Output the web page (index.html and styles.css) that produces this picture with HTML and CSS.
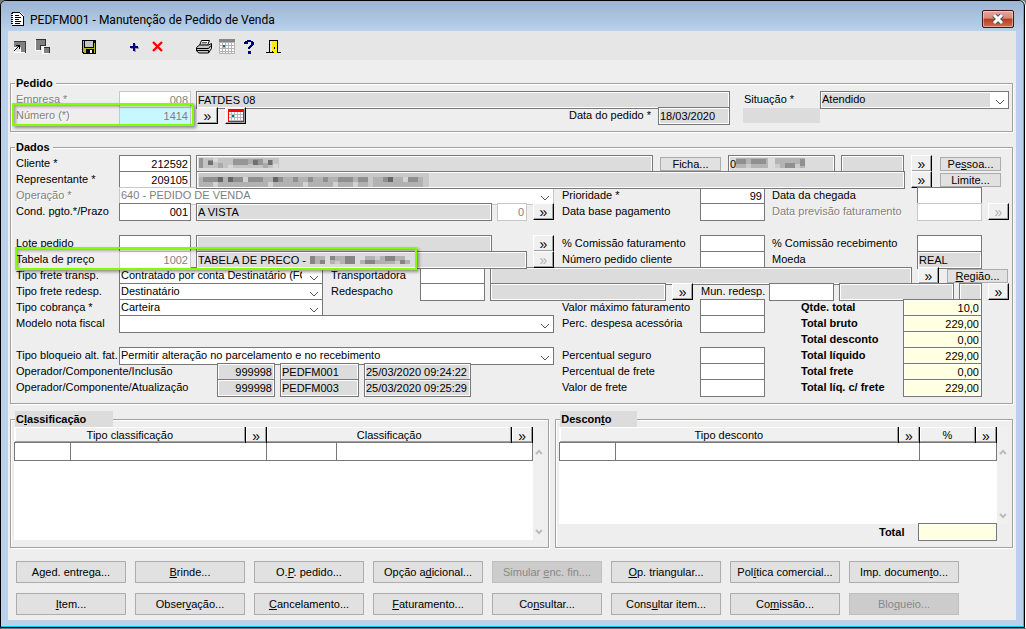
FILE: index.html
```html
<!DOCTYPE html>
<html lang="pt-BR">
<head>
    <meta charset="UTF-8" />
    <meta name="viewport" content="width=device-width, initial-scale=1.0" />
    <title>PEDFM001 - Manutenção de Pedido de Venda</title>
    <link rel="stylesheet" href="styles.css">
</head>
<body>

<div class="window">
    <header class="titlebar">
        <svg width="14" height="16" viewBox="0 0 14 16" shape-rendering="crispEdges">
            <path d="M1 1h8l4 4v10H1z" fill="#fff"/>
            <path d="M1 1h8v1H1zM9 2h1v1H9zM10 3h1v1h-1zM11 4h1v1h-1zM12 5h1v10h-1zM1 14h12v1H1z" fill="#000"/>
            <path d="M0 2h2v1H0zM0 4h2v1H0zM0 6h2v1H0zM0 8h2v1H0zM0 10h2v1H0zM0 12h2v1H0zM4 4h4v1H4zM4 6h6v1H4zM4 8h4v1H4zM4 10h6v1H4zM4 12h5v1H4z" fill="#000"/>
        </svg>
        <h1>PEDFM001 - Manutenção de Pedido de Venda</h1>
        <button class="close" aria-label="Fechar">
            <svg width="12" height="10" viewBox="0 0 12 10">
                <path d="M2 1l8 8M10 1l-8 8" stroke="#4c5363" stroke-width="5"/>
                <path d="M2 1l8 8M10 1l-8 8" stroke="#fff" stroke-width="3"/>
            </svg>
        </button>
    </header>

    <div class="client">
        <nav class="toolbar">
            <div class="tools">
                <button class="tool" aria-label="Restaurar">
                    <svg width="16" height="16" viewBox="0 0 16 16" shape-rendering="crispEdges">
                        <path d="M2 2h11v11H9V8H2z" fill="#808080"/>
                        <path d="M2 2h12v1H2zM13 2h1v12h-1z" fill="#404040"/>
                        <path d="M2 8h2v1H2zM3 13h10v1H3zM2 10h1v4H2zM8 9h1v4H8z" fill="#fff"/>
                        <path d="M4 6h4v4H7V8H6v1H5v1H4v1H3v1H2v-1h1v-1h1V9h1V8h1V7H4z" fill="#000"/>
                    </svg>
                </button>
                <button class="tool" aria-label="Janelas">
                    <svg width="16" height="16" viewBox="0 0 16 16" shape-rendering="crispEdges">
                        <path d="M0 1h10v7H5v4H0zM7 8h6v7H7z" fill="#fff"/>
                        <path d="M1 1h9v5H5v5H1zM9 9h5v5H9z" fill="#808080"/>
                        <path d="M1 0h10v1H1zM10 0h1v6h-1zM5 6h6v1H5zM5 6h1v5H5zM9 8h6v1H9zM14 8h1v6h-1z" fill="#303030"/>
                    </svg>
                </button>
            </div>
            <div class="tools">
                <button class="tool" aria-label="Salvar">
                    <svg width="16" height="16" viewBox="0 0 16 16" shape-rendering="crispEdges">
                        <path d="M1 1h14v14H2l-1-1z" fill="#000"/>
                        <path d="M2 2h1v11H2zM13 4h1v10h-1zM3 9h10v1H3zM3 10h2v4H3z" fill="#b5b52c"/>
                        <path d="M4 2h8v6H4z" fill="#c6c6c6"/>
                        <path d="M9 11h2v3H9z" fill="#fff"/>
                    </svg>
                </button>
            </div>
            <div class="tools">
                <button class="tool" aria-label="Novo">
                    <svg width="16" height="16" viewBox="0 0 16 16" shape-rendering="crispEdges">
                        <path d="M7 5h2v3h3v2H9v3H7v-3H4V8h3z" fill="#9a9aa5"/>
                        <path d="M6 4h2v3h3v2H8v3H6V9H3V7h3z" fill="#000080"/>
                    </svg>
                </button>
                <button class="tool" aria-label="Excluir">
                    <svg width="16" height="16" viewBox="0 0 16 16">
                        <path d="M3 3l9 9M12 3l-9 9" stroke="#f00" stroke-width="2.4"/>
                    </svg>
                </button>
            </div>
            <div class="tools">
                <button class="tool" aria-label="Imprimir">
                    <svg width="16" height="16" viewBox="0 0 16 16">
                        <path d="M5.500 1.500h8l-2 5h-8z" fill="#fff" stroke="#000"/>
                        <path d="M6 3.500h5M5.500 5h5" stroke="#666"/>
                        <path d="M.5 8.500l3-2.500h9l3-1.500v5l-3 4.500H3l-2.500-2z" fill="#c8c8c8" stroke="#000"/>
                        <path d="M1 9.500h11.500l2.500-3M1 11.500h11.500v2.500" fill="none" stroke="#000"/>
                        <path d="M7.500 10.500h3" stroke="#e8e800"/>
                    </svg>
                </button>
                <button class="tool" aria-label="Calendário">
                    <svg width="16" height="16" viewBox="0 0 16 16" shape-rendering="crispEdges">
                        <path d="M0 0h16v15H0z" fill="#b4b4b4"/>
                        <path d="M0 0h16v3H0z" fill="#858585"/>
                        <path d="M1 4h2v2H1zM4 4h2v2H4zM7 4h2v2H7zM10 4h2v2h-2zM13 4h2v2h-2zM1 7h2v2H1zM7 7h2v2H7zM10 7h2v2h-2zM13 7h2v2h-2zM1 10h2v2H1zM4 10h2v2H4zM7 10h2v2H7zM10 10h2v2h-2zM13 10h2v2h-2zM1 13h2v1H1zM4 13h2v1H4zM7 13h2v1H7zM10 13h2v1h-2zM13 13h2v1h-2z" fill="#fff"/>
                        <path d="M4 6h2v2H4z" fill="#106aa8"/>
                    </svg>
                </button>
                <button class="tool" aria-label="Ajuda">
                    <svg width="16" height="16" viewBox="0 0 16 16" shape-rendering="crispEdges">
                        <path d="M2 3h1V2h2V1h4v1h2v1h1v3h-1v1h-1v1H9v1H8v1H6V8h1V7h1V6h1V3H6v2H2zM6 12h3v3H6z" fill="#000080"/>
                    </svg>
                </button>
                <button class="tool" aria-label="Sair">
                    <svg width="16" height="16" viewBox="0 0 16 16" shape-rendering="crispEdges">
                        <path d="M4 1h9v12h3v1h-5v1h-1v-1H1v-1h3z" fill="#000"/>
                        <path d="M5 2h2v11H5z" fill="#e6e6e6"/>
                        <path d="M7 2h5v12h-1v1h-1v-1H9v-1H8v-1H7z" fill="#f8f000"/>
                        <path d="M9 8h1v2H9zM12 2h1v11h-1z" fill="#000"/>
                    </svg>
                </button>
            </div>
        </nav>

        <form class="form">
            <fieldset>
                <legend>Pedido</legend>
                <div class="row">
                    <label class="off" for="empresa">Empresa *</label>
                    <input class="code num" id="empresa" value="008" disabled>
                    <input class="show grow" value="FATDES 08" aria-label="Nome da empresa" readonly>
                    <label class="status" for="situacao">Situação *</label>
                    <select class="status-list show" id="situacao"><option>Atendido</option></select>
                </div>
                <div class="row">
                    <div class="mark mark-number">
                        <label class="off" for="numero">Número (*)</label>
                        <input class="code num key" id="numero" value="1414" disabled>
                    </div>
                    <button type="button" class="more" aria-label="Buscar pedido">»</button>
                    <button type="button" class="more cal" aria-label="Calendário">
                        <svg width="16" height="13" viewBox="0 0 16 13" shape-rendering="crispEdges">
                            <path d="M0 0h16v13H0z" fill="#f00"/>
                            <path d="M1 3h14v9H1z" fill="#bbb"/>
                            <path d="M1 3h2v2H1zM4 3h2v2H4zM7 3h2v2H7zM10 3h2v2h-2zM13 3h2v2h-2zM1 6h2v2H1zM7 6h2v2H7zM10 6h2v2h-2zM13 6h2v2h-2zM1 9h2v2H1zM4 9h2v2H4zM7 9h2v2H7zM10 9h2v2h-2zM13 9h2v2h-2z" fill="#fff"/>
                            <path d="M4 6h2v2H4z" fill="#106aa8"/>
                        </svg>
                    </button>
                    <label class="order-date" for="data">Data do pedido *</label>
                    <input class="date show" id="data" value="18/03/2020" readonly>
                    <span class="blank"></span>
                </div>
            </fieldset>

            <fieldset>
                <legend>Dados</legend>
                <div class="row">
                    <label for="cliente">Cliente *</label>
                    <input class="code num" id="cliente" value="212592">
                    <div class="hidden-text grow">
                        <input class="show" aria-label="Nome do cliente" readonly>
                        <svg class="mosaic" width="80" height="12" viewBox="0 0 80 12" shape-rendering="crispEdges">
                            <path d="M0 1h80v10H0z" fill="#c3c3c3"/>
                            <path d="M0 1h4v10H0zM9 3h5v5H9zM34 2h15v6H34zM54 2h10v6H54zM69 3h5v5h-5z" fill="#969696"/>
                            <path d="M19 6h5v5h-5zM49 2h5v5h-5zM64 6h5v5h-5z" fill="#aaa"/>
                            <path d="M9 4h5v4H9zM54 3h5v5h-5zM69 3h4v5h-4z" fill="#707070"/>
                            <path d="M14 1h5v4h-5zM29 8h5v3h-5zM74 7h5v4h-5z" fill="#d8d8d8"/>
                        </svg>
                    </div>
                    <button type="button" class="push gap">Ficha...</button>
                    <div class="hidden-text phone">
                        <input class="show" value="0" aria-label="Telefone" readonly>
                        <svg class="mosaic" width="70" height="12" viewBox="0 0 70 12" shape-rendering="crispEdges">
                            <path d="M0 1h32v10H0zM39 1h30v10H39z" fill="#b4b4b4"/>
                            <path d="M0 2h10v5H0zM15 2h15v5H15zM49 6h10v5H49zM64 2h5v7h-5z" fill="#909090"/>
                            <path d="M10 7h5v4h-5zM39 7h5v4h-5zM59 7h5v4h-5z" fill="#ccc"/>
                        </svg>
                    </div>
                    <input class="w63 show gap-1" aria-label="Ramal" readonly>
                    <button type="button" class="more gap" aria-label="Buscar cliente">»</button>
                    <button type="button" class="push gap-3 last">Pe<u>s</u>soa...</button>
                </div>
                <div class="row">
                    <label for="repres">Representante *</label>
                    <input class="code num" id="repres" value="209105">
                    <div class="hidden-text grow">
                        <input class="show" aria-label="Nome do representante" readonly>
                        <svg class="mosaic" width="230" height="14" viewBox="0 0 230 14" shape-rendering="crispEdges">
                            <path d="M0 0h230v14H0z" fill="#c8c8c8"/>
                            <path d="M0 4h169v10H0zM174 4h50v10h-50z" fill="#b2b2b2"/>
                            <path d="M4 4h20v5H4zM34 4h10v5H34zM49 4h15v5H49zM79 4h5v5h-5zM94 4h5v5h-5zM109 4h5v5h-5zM124 4h5v5h-5zM139 4h15v5h-15zM159 4h10v5h-10zM184 4h5v5h-5zM209 4h10v5h-10z" fill="#8f8f8f"/>
                            <path d="M19 4h5v5h-5zM29 4h5v5h-5zM74 4h5v5h-5zM189 4h5v5h-5z" fill="#666"/>
                            <path d="M14 9h5v5h-5zM44 4h5v5h-5zM69 9h5v5h-5zM104 9h5v5h-5zM134 9h5v5h-5zM154 9h5v5h-5zM204 4h5v5h-5z" fill="#d2d2d2"/>
                        </svg>
                    </div>
                    <button type="button" class="more" aria-label="Buscar representante">»</button>
                    <button type="button" class="push gap-3 last">Limite...</button>
                </div>
                <div class="row">
                    <div class="main">
                        <label class="off" for="operacao">Operação *</label>
                        <select class="grow" id="operacao" disabled><option>640 - PEDIDO DE VENDA</option></select>
                    </div>
                    <div class="mid">
                        <label for="prioridade">Prioridade *</label>
                        <input class="num" id="prioridade" value="99">
                    </div>
                    <div class="side">
                        <label for="chegada">Data da chegada</label>
                        <input id="chegada">
                    </div>
                </div>
                <div class="row">
                    <div class="main">
                        <label for="cond">Cond. pgto.*/Prazo</label>
                        <input class="code num" id="cond" value="001">
                        <input class="show grow" value="A VISTA" aria-label="Condição de pagamento" readonly>
                        <input class="w30 num" value="0" aria-label="Prazo" disabled>
                        <button type="button" class="more" aria-label="Buscar condição">»</button>
                    </div>
                    <div class="mid">
                        <label for="base">Data base pagamento</label>
                        <input id="base">
                    </div>
                    <div class="side">
                        <label class="off" for="previsao">Data previsão faturamento</label>
                        <input id="previsao" disabled>
                        <button type="button" class="more" aria-label="Buscar previsão" disabled>»</button>
                    </div>
                </div>
                <div class="row"></div>
                <div class="row">
                    <div class="main">
                        <label for="lote">Lote pedido</label>
                        <input class="code num" id="lote">
                        <input class="show grow" aria-label="Descrição do lote" readonly>
                        <button type="button" class="more after-lot" aria-label="Buscar lote">»</button>
                    </div>
                    <div class="mid">
                        <label for="com-fat">% Comissão faturamento</label>
                        <input id="com-fat">
                    </div>
                    <div class="side">
                        <label for="com-rec">% Comissão recebimento</label>
                        <input id="com-rec">
                    </div>
                </div>
                <div class="row">
                    <div class="main mark mark-table">
                        <label for="tabela">Tabela de preço</label>
                        <input class="code num" id="tabela" value="1002" disabled>
                        <div class="hidden-text grow">
                            <input class="show" value="TABELA DE PRECO -" aria-label="Nome da tabela" readonly>
                            <svg class="mosaic after-name" width="100" height="10" viewBox="0 0 100 10" shape-rendering="crispEdges">
                                <path d="M0 1h15v8H0zM20 1h25v8H20zM50 5h50v4H50zM55 1h40v4H55z" fill="#b2b2b2"/>
                                <path d="M0 1h5v8H0zM10 5h5v4h-5zM20 1h5v4h-5zM35 1h10v8H35zM55 5h10v4H55zM75 1h10v5H75zM90 5h5v4h-5z" fill="#858585"/>
                                <path d="M25 6h5v3h-5zM65 1h5v4h-5zM85 6h5v3h-5z" fill="#ccc"/>
                            </svg>
                        </div>
                        <button type="button" class="more" aria-label="Buscar tabela" disabled>»</button>
                    </div>
                    <div class="mid">
                        <label for="num-cli">Número pedido cliente</label>
                        <input id="num-cli">
                    </div>
                    <div class="side">
                        <label for="moeda">Moeda</label>
                        <input class="show" id="moeda" value="REAL" readonly>
                    </div>
                </div>
                <div class="row">
                    <label for="frete-t">Tipo frete transp.</label>
                    <select class="w204" id="frete-t"><option>Contratado por conta Destinatário (FOB)</option></select>
                    <label class="carrier" for="transp">Transportadora</label>
                    <input class="w65" id="transp">
                    <input class="show grow" aria-label="Nome da transportadora" readonly>
                    <button type="button" class="more" aria-label="Buscar transportadora">»</button>
                    <button type="button" class="push gap-3 gap-end"><u>R</u>egião...</button>
                </div>
                <div class="row">
                    <label for="frete-r">Tipo frete redesp.</label>
                    <select class="w204" id="frete-r"><option>Destinatário</option></select>
                    <label class="carrier" for="redesp">Redespacho</label>
                    <input class="w65" id="redesp">
                    <input class="show grow-3" aria-label="Nome do redespacho" readonly>
                    <button type="button" class="more" aria-label="Buscar redespacho">»</button>
                    <label class="town" for="mun">Mun. redesp.</label>
                    <input class="w65" id="mun">
                    <input class="show grow-2" aria-label="Município" readonly>
                    <input class="show w23" aria-label="UF" readonly>
                    <button type="button" class="more" aria-label="Buscar município">»</button>
                </div>
                <div class="row">
                    <div class="main">
                        <label for="cobranca">Tipo cobrança *</label>
                        <select class="w204" id="cobranca"><option>Carteira</option></select>
                    </div>
                    <div class="mid">
                        <label for="maximo">Valor máximo faturamento</label>
                        <input id="maximo">
                    </div>
                    <div class="side total">
                        <label for="qtde">Qtde. total</label>
                        <input class="num" id="qtde" value="10,0" readonly>
                    </div>
                </div>
                <div class="row">
                    <div class="main">
                        <label for="modelo">Modelo nota fiscal</label>
                        <select class="grow" id="modelo"><option></option></select>
                    </div>
                    <div class="mid">
                        <label for="despesa">Perc. despesa acessória</label>
                        <input id="despesa">
                    </div>
                    <div class="side total">
                        <label for="bruto">Total bruto</label>
                        <input class="num" id="bruto" value="229,00" readonly>
                    </div>
                </div>
                <div class="row">
                    <div class="main"></div>
                    <div class="side total">
                        <label for="desconto">Total desconto</label>
                        <input class="num" id="desconto" value="0,00" readonly>
                    </div>
                </div>
                <div class="row">
                    <div class="main">
                        <label for="bloqueio">Tipo bloqueio alt. fat.</label>
                        <select class="grow" id="bloqueio"><option>Permitir alteração no parcelamento e no recebimento</option></select>
                    </div>
                    <div class="mid">
                        <label for="seguro">Percentual seguro</label>
                        <input id="seguro">
                    </div>
                    <div class="side total">
                        <label for="liquido">Total líquido</label>
                        <input class="num" id="liquido" value="229,00" readonly>
                    </div>
                </div>
                <div class="row">
                    <div class="main">
                        <label class="audit" for="inclusao">Operador/Componente/Inclusão</label>
                        <input class="w58 num show" id="inclusao" value="999998" readonly>
                        <input class="w79 show" value="PEDFM001" aria-label="Componente inclusão" readonly>
                        <input class="w107 show" value="25/03/2020 09:24:22" aria-label="Data inclusão" readonly>
                    </div>
                    <div class="mid">
                        <label for="perc-frete">Percentual de frete</label>
                        <input id="perc-frete">
                    </div>
                    <div class="side total">
                        <label for="frete">Total frete</label>
                        <input class="num" id="frete" value="0,00" readonly>
                    </div>
                </div>
                <div class="row">
                    <div class="main">
                        <label class="audit" for="atualizacao">Operador/Componente/Atualização</label>
                        <input class="w58 num show" id="atualizacao" value="999998" readonly>
                        <input class="w79 show" value="PEDFM003" aria-label="Componente atualização" readonly>
                        <input class="w107 show" value="25/03/2020 09:25:29" aria-label="Data atualização" readonly>
                    </div>
                    <div class="mid">
                        <label for="valor-frete">Valor de frete</label>
                        <input id="valor-frete">
                    </div>
                    <div class="side total">
                        <label for="liq-frete">Total líq. c/ frete</label>
                        <input class="num" id="liq-frete" value="229,00" readonly>
                    </div>
                </div>
            </fieldset>

            <div class="panels">
                <fieldset class="panel panel-class">
                    <legend>C<u>l</u>assificação</legend>
                    <div class="list">
                        <div class="sheet">
                            <table>
                                <colgroup><col class="c-56"><col><col class="c-21"><col class="c-70"><col><col class="c-21"></colgroup>
                                <thead>
                                    <tr>
                                        <th colspan="2">Tipo classificação</th>
                                        <th><button type="button" aria-label="Buscar tipo">»</button></th>
                                        <th colspan="2">Classificação</th>
                                        <th><button type="button" aria-label="Buscar classificação">»</button></th>
                                    </tr>
                                </thead>
                                <tbody>
                                    <tr>
                                        <td><input aria-label="Código do tipo"></td>
                                        <td colspan="2"><input aria-label="Tipo classificação"></td>
                                        <td><input aria-label="Código da classificação"></td>
                                        <td colspan="2"><input aria-label="Classificação"></td>
                                    </tr>
                                </tbody>
                            </table>
                        </div>
                        <div class="scroll">
                            <svg width="8" height="6" viewBox="0 0 8 6"><path d="M1 5l3-3 3 3" fill="none" stroke="#bdbdbd" stroke-width="2"/></svg>
                            <svg width="8" height="6" viewBox="0 0 8 6"><path d="M1 1l3 3 3-3" fill="none" stroke="#bdbdbd" stroke-width="2"/></svg>
                        </div>
                    </div>
                </fieldset>

                <fieldset class="panel panel-disc">
                    <legend>Descon<u>t</u>o</legend>
                    <div class="list">
                        <div class="sheet">
                            <table>
                                <colgroup><col class="c-56"><col><col class="c-21"><col class="c-56"><col class="c-21"></colgroup>
                                <thead>
                                    <tr>
                                        <th colspan="2">Tipo desconto</th>
                                        <th><button type="button" aria-label="Buscar desconto">»</button></th>
                                        <th>%</th>
                                        <th><button type="button" aria-label="Buscar percentual">»</button></th>
                                    </tr>
                                </thead>
                                <tbody>
                                    <tr>
                                        <td><input aria-label="Código do desconto"></td>
                                        <td colspan="2"><input aria-label="Tipo desconto"></td>
                                        <td colspan="2"><input aria-label="Percentual"></td>
                                    </tr>
                                </tbody>
                            </table>
                        </div>
                        <div class="scroll">
                            <svg width="8" height="6" viewBox="0 0 8 6"><path d="M1 5l3-3 3 3" fill="none" stroke="#bdbdbd" stroke-width="2"/></svg>
                            <svg width="8" height="6" viewBox="0 0 8 6"><path d="M1 1l3 3 3-3" fill="none" stroke="#bdbdbd" stroke-width="2"/></svg>
                        </div>
                    </div>
                    <div class="row total sum">
                        <label for="total-desc">Total</label>
                        <input class="num" id="total-desc" readonly>
                    </div>
                </fieldset>
            </div>

            <div class="actions">
                <button type="button">A<u>g</u>ed. entrega...</button>
                <button type="button"><u>B</u>rinde...</button>
                <button type="button">O.<u>P</u>. pedido...</button>
                <button type="button">Opção a<u>d</u>icional...</button>
                <button type="button" disabled>Simular <u>e</u>nc. fin....</button>
                <button type="button"><u>O</u>p. triangular...</button>
                <button type="button">Pol<u>í</u>tica comercial...</button>
                <button type="button">Imp. documen<u>t</u>o...</button>
                <button type="button"><u>I</u>tem...</button>
                <button type="button">Obser<u>v</u>ação...</button>
                <button type="button"><u>C</u>ancelamento...</button>
                <button type="button"><u>F</u>aturamento...</button>
                <button type="button">Co<u>n</u>sultar...</button>
                <button type="button">Cons<u>u</u>ltar item...</button>
                <button type="button">Co<u>m</u>issão...</button>
                <button type="button" disabled>Blo<u>q</u>ueio...</button>
            </div>
        </form>
    </div>
</div>

</body>
</html>
```
FILE: styles.css
```css
*, *::after {
    margin: 0;
    padding: 0;
    box-sizing: border-box;
}
html {
    background-color: #77777f;
}
body {
    font-family: "Liberation Sans", Arial, sans-serif;
    font-size: 11px;
    line-height: 16px;
    color: #000;
}
input, select, button {
    font: inherit;
    color: inherit;
    border-radius: 0;
    appearance: none;
}

/* window frame */
.window {
    margin-right: 1px;
    padding: 0 8px 7px 7px;
    background-color: #b9d1ea;
    border: 1px solid #000;
    border-radius: 6px 6px 0 0;
    box-shadow: inset -1px -1px 0 #00d0f0, 1px 0 0 #fff;
}
.titlebar {
    display: flex;
    align-items: center;
    height: 30px;
    margin: 0 -7px;
    padding: 0 9px 0 10px;
    background: linear-gradient(#9ab4d2, #b9d1ea);
    border-radius: 5px 5px 0 0;
}
.titlebar h1 {
    flex: 1;
    margin-left: 5px;
    padding-top: 7px;
    font-family: Roboto, "Open Sans", sans-serif;
    font-size: 12px;
    font-weight: normal;
}
.titlebar svg {
    margin-top: 5px;
}
.close {
    display: flex;
    align-items: center;
    justify-content: center;
    width: 32px;
    height: 18px;
    margin-top: 6px;
    border: 1px solid #43141a;
    border-radius: 2px;
    background: linear-gradient(#e6a596 0%, #d98a78 45%, #b83a20 50%, #cf6e50 100%);
    box-shadow: inset 0 0 0 1px rgba(255, 255, 255, 0.4);
}
.close svg {
    margin: 0;
}
.client {
    background-color: #eee;
    padding-bottom: 5px;
}

/* toolbar */
.toolbar {
    display: flex;
    gap: 30px;
    height: 29px;
    padding: 8px 4px 0;
    background-color: #e6e6e6;
}
.tools {
    display: flex;
    gap: 7px;
}
.tool {
    width: 16px;
    height: 16px;
    border: none;
    background: none;
}
.tool svg {
    display: block;
}

/* groups */
.form {
    display: flex;
    flex-direction: column;
    gap: 7px;
    padding: 15px 3px 0 2px;
}
fieldset {
    min-width: 0;
    padding: 0 3px 8px 5px;
    border: 1px solid #a0a0a0;
    box-shadow: 1px 1px 0 #fff, inset 1px 1px 0 #fff;
}
legend {
    height: 16px;
    margin-left: -1px;
    padding: 0 3px 0 1px;
    font-weight: bold;
    background-color: #eee;
}
.row, .main, .mid, .side, .mark-number {
    display: flex;
    gap: 5px;
    height: 16px;
}
.main {
    flex: 1;
    min-width: 0;
}
.mid {
    width: 203px;
    margin-left: 3px;
}
.side {
    width: 237px;
    margin-left: 2px;
}
label {
    flex: none;
    width: 98px;
    white-space: nowrap;
}
.mid label {
    width: 133px;
}
.side label {
    width: 140px;
}
.mid input, .side input {
    width: 65px;
}
.off {
    color: #808080;
    text-shadow: 1px 1px 0 #fff;
}

/* fields */
input, select {
    flex: none;
    height: 18px;
    min-width: 0;
    padding: 0 2px 0 1px;
    border: 1px solid #787878;
    background-color: #fff;
}
select {
    padding: 0 20px 2px 1px;
    line-height: 14px;
    background: #fff url("data:image/svg+xml,%3Csvg xmlns='http://www.w3.org/2000/svg' width='10' height='6'%3E%3Cpath d='M1 1l4 4 4-4' fill='none' stroke='%23555'/%3E%3C/svg%3E") no-repeat right 3px bottom 3px;
}
input:disabled, select:disabled {
    color: #808080;
    border-color: #c8c8c8;
    opacity: 1;
}
.num {
    text-align: right;
}
.show {
    background-color: #dcdcdc;
    box-shadow: inset 0 0 0 1px #fff;
}
.status-list {
    width: 189px;
    background-image: url("data:image/svg+xml,%3Csvg xmlns='http://www.w3.org/2000/svg' width='10' height='6'%3E%3Cpath d='M1 1l4 4 4-4' fill='none' stroke='%23555'/%3E%3C/svg%3E"), linear-gradient(#fff, #fff);
    background-position: right 3px bottom 3px, right top;
    background-size: 10px 6px, 18px 100%;
}
.key:disabled {
    background-color: #c8f8ff;
}
.grow, .grow-2, .grow-3 {
    flex: 1 1 0;
    min-width: 0;
}
.grow-2 {
    flex-grow: 9;
}
.grow-3 {
    flex-grow: 14;
}
.code { width: 72px; }
.date { width: 72px; }
.w23 { width: 23px; }
.w30 { width: 30px; }
.w58 { width: 58px; }
.w63 { width: 63px; }
.w65 { width: 65px; }
.w79 { width: 79px; }
.w107 { width: 107px; }
.w204 { width: 204px; }
.phone { width: 107px; margin-left: 2px; }
.status { width: 71px; margin-left: 9px; }
.carrier { width: 84px; margin-left: 3px; }
.town { width: 63px; margin-left: 3px; }
.audit { width: 196px; }
.order-date {
    width: 84px;
    margin-left: auto;
}
.blank {
    width: 77px;
    margin: 1px 189px 0 8px;
    background-color: #dcdcdc;
}
.total {
    font-weight: bold;
}
.total label {
    width: 97px;
    margin-left: 29px;
}
.total input {
    width: 79px;
    font-weight: normal;
    background-color: #ffffe1;
    box-shadow: inset 0 0 0 1px #fff;
}

/* pixelated names */
.hidden-text {
    position: relative;
}
.hidden-text input {
    width: 100%;
}
.mosaic {
    position: absolute;
    top: 2px;
    left: 3px;
}
.phone .mosaic {
    left: 8px;
}
.after-name {
    top: 4px;
    left: 114px;
}

/* green highlight over a row */
.mark {
    position: relative;
}
.mark::after {
    content: "";
    position: absolute;
    z-index: 1;
    top: -4px;
    left: -4px;
    height: 23px;
    border: 2px solid #80ff00;
    box-shadow: 2px 2px 3px rgba(0, 0, 0, 0.4), inset 2px 2px 3px rgba(0, 0, 0, 0.3);
    pointer-events: none;
}
.mark-number::after {
    width: 182px;
}
.mark-table::after {
    width: 402px;
    left: -1px;
}

/* buttons */
.more, th button {
    flex: none;
    width: 21px;
    height: 17px;
    border: 1px solid #fff;
    border-right-color: #000;
    border-bottom-color: #000;
    background-color: #f0f0f0;
    box-shadow: inset -1px -1px 0 #a0a0a0;
    font-size: 14px;
    line-height: 12px;
}
.more {
    margin-left: 1px;
}
.more:disabled {
    color: #b0b0b0;
}
.cal {
    margin-left: 2px;
}
.cal svg {
    display: block;
    margin: 0 auto;
}
.after-lot {
    margin-left: 36px;
}
.push {
    width: 61px;
    height: 14px;
    margin-top: 2px;
    border: 1px solid #adadad;
    background-color: #e1e1e1;
    line-height: 12px;
}
.gap { margin-left: 2px; }
.gap-1 { margin-left: 1px; }
.gap-3 { margin-left: 3px; }
.gap-end { margin-right: 1px; }
.last { margin-right: 8px; }

/* lists */
.panels {
    display: flex;
    gap: 6px;
}
.panel {
    padding: 0 4px 7px 3px;
}
.panel-class {
    flex: 540 1 0;
}
.panel-disc {
    flex: 457 1 0;
}
.panel legend {
    width: 98px;
    margin-left: 1px;
    background-color: #dcdcdc;
}
.panel-disc legend {
    width: 77px;
}
.list {
    display: flex;
}
.sheet {
    flex: 1;
    height: 113px;
    background-color: #fff;
}
.panel-disc .sheet {
    height: 97px;
}
table {
    width: 100%;
    table-layout: fixed;
    border-collapse: collapse;
}
.c-21 { width: 21px; }
.c-56 { width: 56px; }
.c-70 { width: 70px; }
th {
    height: 15px;
    padding-top: 2px;
    background-color: #f0f0f0;
    border-right: 1px solid #000;
    box-shadow: inset -1px -1px 0 #a0a0a0, inset 1px 1px 0 #fff;
    font-weight: normal;
    line-height: 13px;
}
th button {
    display: block;
    width: 100%;
    height: 13px;
    border: none;
    background: none;
    box-shadow: none;
}
td {
    height: 18px;
    border: 1px solid #787878;
}
td input {
    display: block;
    width: 100%;
    height: 16px;
    border: none;
}
.scroll {
    display: flex;
    flex-direction: column;
    justify-content: space-between;
    width: 11px;
    padding: 22px 0 5px 2px;
    background-color: #f0f0f0;
}
.sum {
    justify-content: flex-end;
    padding-right: 11px;
}
.sum label {
    width: 34px;
    margin: 0;
}
.sum input {
    margin-top: -1px;
}

/* bottom buttons */
.actions {
    display: grid;
    grid-template-columns: repeat(8, 110px);
    gap: 10px 9px;
    padding: 6px 6px 0;
}
.actions button {
    height: 22px;
    border: 1px solid #adadad;
    background-color: #e1e1e1;
    line-height: 20px;
}
.actions button:disabled {
    color: #888;
    background-color: #ccc;
    border-color: #bfbfbf;
}
```
